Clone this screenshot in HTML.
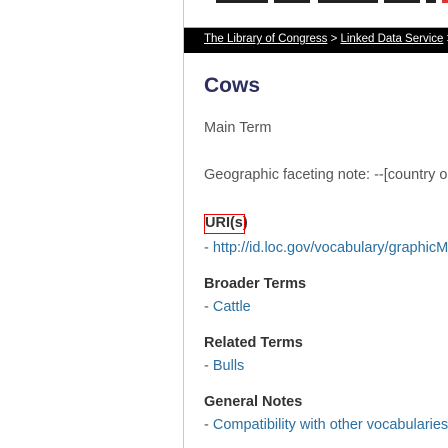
<!DOCTYPE html>
<html><head><meta charset="utf-8"><style>
html,body{margin:0;padding:0;width:448px;height:448px;overflow:hidden;background:#fff;font-family:"Liberation Sans",sans-serif;}
.vl{position:absolute;left:183px;top:0;width:1px;height:448px;background:#c8c8c8;}
.hl{position:absolute;left:184px;top:27px;width:264px;height:1px;background:#aaa;}
.bar{position:absolute;left:184px;top:28px;width:264px;height:25px;background:#000;}
.bc{position:absolute;left:204px;top:33px;font-size:11.5px;color:#fff;white-space:nowrap;}
.bc u{text-decoration:underline}
.logo{position:absolute;top:0;height:3px;background:#222}
.t{position:absolute;left:204px;white-space:nowrap;font-size:14.5px;color:#555}
.h{font-weight:bold;color:#333}
a{color:#2a6fa0;text-decoration:none}
.box{position:absolute;left:204px;top:214px;width:39px;height:18px;border:1px solid #e00;}
</style></head><body>
<div class="logo" style="left:216px;width:52px"></div>
<div class="logo" style="left:274px;width:36px"></div>
<div class="logo" style="left:318px;width:60px"></div>
<div class="logo" style="left:384px;width:36px"></div>
<div class="logo" style="left:426px;width:10px"></div>
<div class="logo" style="left:442px;width:6px;background:#d33"></div>
<div class="vl"></div>
<div class="hl"></div>
<div class="bar"></div>
<div class="bc"><u>The Library of Congress</u> &gt; <u>Linked Data Service</u> &gt;</div>
<div class="t" style="top:74px;font-size:21px;font-weight:bold;color:#2c2f5f">Cows</div>
<div class="t" style="top:120px">Main Term</div>
<div class="t" style="top:167px">Geographic faceting note: --[country or state]--[city]</div>
<div class="t h" style="top:215px;left:205px">URI(s)</div>
<div class="box"></div>
<div class="t" style="top:240px">- <a>http://id.loc.gov/vocabulary/graphicMaterials/tgm002664</a></div>
<div class="t h" style="top:276px">Broader Terms</div>
<div class="t" style="top:299px">- <a>Cattle</a></div>
<div class="t h" style="top:335px">Related Terms</div>
<div class="t" style="top:358px">- <a>Bulls</a></div>
<div class="t h" style="top:394px">General Notes</div>
<div class="t" style="top:417px">- <a>Compatibility with other vocabularies</a></div>
</body></html>
